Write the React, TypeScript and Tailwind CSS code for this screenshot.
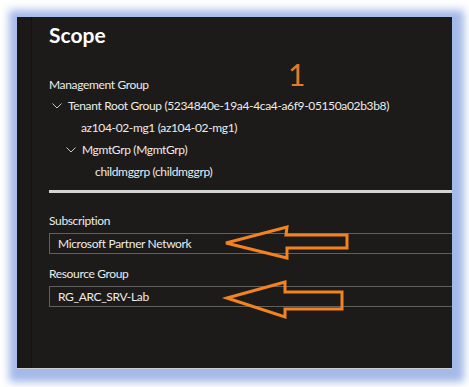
import { ReactNode } from "react"

function Chevron() {
  return (
    <svg width="10" height="6" viewBox="0 0 10 6" className="shrink-0">
      <polyline points="0.5,0.5 5,5 9.5,0.5" fill="none" stroke="#c8c8c8" strokeWidth="1" />
    </svg>
  )
}

function TreeRow({ indent, chevron, children }: { indent: string; chevron?: boolean; children: ReactNode }) {
  return (
    <div className={`flex h-[22px] items-center gap-[6px] ${indent}`}>
      {chevron && <Chevron />}
      <span>{children}</span>
    </div>
  )
}

function Field({ label, value }: { label: string; value: string }) {
  return (
    <div className="flex flex-col">
      <div className="h-[20px] leading-[20px]">{label}</div>
      <div className="mt-[2px] flex h-[21px] w-[420px] items-center border border-[#5f5f5f] pl-[8px]">{value}</div>
    </div>
  )
}

export default function App() {
  return (
    <div className="relative h-[387px] w-[469px] bg-white p-[17px]" style={{ fontFamily: 'Lato, "Noto Sans", sans-serif' }}>
      {/* Dark panel with blue glow */}
      <div className="flex h-[352px] w-[435px] overflow-hidden border-b border-[#cfcfcf] bg-[#1c1b1a] text-[12px] tracking-[-0.35px] text-[#ececec] shadow-[2px_3px_8px_10px_rgba(140,168,226,0.8)]">
        <div className="w-[15px] shrink-0 border-r border-[#141312] bg-[#1a1918]" />
        <div className="flex flex-col pl-[17px] pt-[3px]">
          <h1 className="text-[21px] font-bold leading-[30px] tracking-normal text-white">Scope</h1>

          <div className="mt-[25px] h-[20px] leading-[20px]">Management Group</div>
          <TreeRow indent="pl-[3px]" chevron>
            Tenant Root Group (5234840e-19a4-4ca4-a6f9-05150a02b3b8)
          </TreeRow>
          <TreeRow indent="pl-[32px]">az104-02-mg1 (az104-02-mg1)</TreeRow>
          <TreeRow indent="pl-[17px]" chevron>
            MgmtGrp (MgmtGrp)
          </TreeRow>
          <TreeRow indent="pl-[46px]">childmggrp (childmggrp)</TreeRow>

          <div className="mt-[7px] h-[3px] w-[420px] bg-[#d4d4d4]" />

          <div className="mt-[18px] flex flex-col gap-[10px]">
            <Field label="Subscription" value="Microsoft Partner Network" />
            <Field label="Resource Group" value="RG_ARC_SRV-Lab" />
          </div>
        </div>
      </div>

      {/* Annotations */}
      <div className="absolute left-[288px] top-[56px] text-[30px] leading-[36px] text-[#e8792b]">1</div>
      <svg className="absolute left-0 top-0" width="469" height="387" viewBox="0 0 469 387">
        <polygon
          points="226,243 287,227 286,235 347,235 347,248 287,248 287,258"
          fill="none"
          stroke="#f3831f"
          strokeWidth="3"
          strokeLinejoin="miter"
        />
        <polygon
          points="227,298 285,282 285,292 342,292 342,309 285,309 285,317"
          fill="none"
          stroke="#f3831f"
          strokeWidth="3"
          strokeLinejoin="miter"
        />
      </svg>
    </div>
  )
}
